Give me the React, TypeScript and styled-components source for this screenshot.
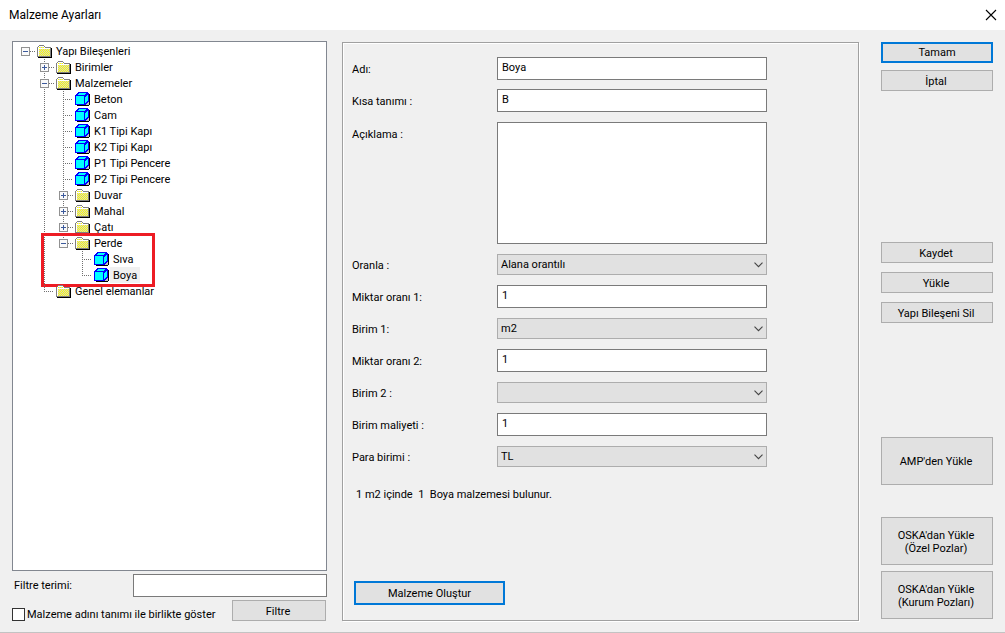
import React, { useState } from "react";
import styled, { createGlobalStyle } from "styled-components";

const GlobalStyle = createGlobalStyle`
  *, *::after { box-sizing: border-box; }
  body {
    margin: 0;
    background: #f0f0f0;
    color: #000;
    font-family: Roboto, Tahoma, sans-serif;
    font-size: 11px;
    line-height: 13px;
  }
  button, input, select, textarea { font: inherit; color: inherit; border-radius: 0; }
`;

const Dialog = styled.div`
  display: flex;
  flex-direction: column;
  min-height: 100vh;
  border-bottom: 1px solid #c3c3c3;
`;

const TitleBar = styled.header`
  display: flex;
  align-items: center;
  justify-content: space-between;
  height: 30px;
  padding: 0 8px 0 9px;
  background: #fff;
`;

const Title = styled.h1`
  margin: 0;
  font-size: 12px;
  font-weight: 400;
  line-height: 16px;
`;

const CloseButton = styled.button`
  display: flex;
  padding: 0;
  border: 0;
  background: none;
`;

const Content = styled.main`
  flex: 1;
  display: grid;
  grid-template-columns: 315px minmax(440px, 1fr) 112px;
  padding: 11px 12px;
`;

const Sidebar = styled.section`
  display: flex;
  flex-direction: column;
`;

const TreeBox = styled.nav`
  flex: 1;
  margin-bottom: 3px;
  padding: 1px 3px;
  border: 1px solid #828790;
  background: #fff;
`;

const Branch = styled.ul`
  margin: 0;
  padding: 0;
  list-style: none;
`;

const Node = styled.li<{ $marked?: boolean }>`
  position: relative;
  ${(p) =>
    p.$marked &&
    `&::after {
      content: "";
      position: absolute;
      inset: -2px auto -4px 25px;
      width: 114px;
      border: 3px solid #ed1c24;
      pointer-events: none;
    }`}
`;

const NodeRow = styled.div`
  display: flex;
  align-items: center;
  height: 16px;
`;

const Guide = styled.svg`
  flex: none;
  width: 19px;
  height: 16px;
`;

const Toggle = styled.button`
  display: flex;
  padding: 0;
  border: 0;
  background: none;
`;

const NodeIcon = styled.svg`
  flex: none;
  width: 16px;
  height: 16px;
  margin-left: 2px;
`;

const NodeLabel = styled.span<{ $selected?: boolean }>`
  padding: 2px 3px 1px;
  background: ${(p) => (p.$selected ? "#f0f0f0" : "transparent")};
  white-space: nowrap;
`;

const FilterRow = styled.div`
  display: flex;
  align-items: center;
  justify-content: space-between;
  padding-left: 2px;
`;

const OptionRow = styled.div`
  display: flex;
  justify-content: space-between;
  padding: 3px 1px 0 0;
`;

const CheckLabel = styled.label`
  display: flex;
  align-items: center;
  gap: 2px;
  padding-top: 8px;
  white-space: nowrap;
`;

const CheckBox = styled.input`
  appearance: none;
  width: 13px;
  height: 13px;
  margin: 0;
  border: 1px solid #333;
  background: #fff;
  &:checked { box-shadow: inset 0 0 0 2px #fff; background: #333; }
`;

const TextInput = styled.input<{ $width?: string }>`
  width: ${(p) => p.$width ?? "270px"};
  height: 23px;
  padding: 0 4px 2px;
  border: 1px solid #7a7a7a;
  background: #fff;
`;

const TextArea = styled.textarea`
  display: block;
  width: 270px;
  height: 122px;
  padding: 3px 4px;
  border: 1px solid #7a7a7a;
  background: #fff;
  resize: none;
`;

const SelectWrap = styled.div`
  display: grid;
  align-items: center;
  width: 270px;
  & > * { grid-area: 1 / 1; }
`;

const Select = styled.select`
  appearance: none;
  width: 100%;
  height: 21px;
  padding: 0 20px 0 3px;
  border: 1px solid #adadad;
  background: #e1e1e1;
`;

const Chevron = styled.svg`
  justify-self: end;
  margin-right: 4px;
  pointer-events: none;
`;

const Button = styled.button<{ $primary?: boolean; $width?: string; $height?: string }>`
  width: ${(p) => p.$width ?? "112px"};
  height: ${(p) => p.$height ?? "21px"};
  padding: ${(p) => (p.$primary ? "0" : "1px 2px 0 0")};
  border: ${(p) => (p.$primary ? "2px solid #0078d7" : "1px solid #adadad")};
  background: #e1e1e1;
  text-align: center;
  white-space: pre-line;
`;

const FormPanel = styled.form`
  display: flex;
  flex-direction: column;
  margin: 1px 22px 0 15px;
  padding: 14px 8px 15px;
  border: 1px solid #a0a0a0;
  box-shadow: inset 1px 1px 0 #fff, 1px 1px 0 #fff;
`;

const Fields = styled.div`
  display: flex;
  flex-direction: column;
  gap: 9px;
`;

const Field = styled.div<{ $tall?: boolean }>`
  display: grid;
  grid-template-columns: 145px 1fr;
  align-items: ${(p) => (p.$tall ? "start" : "center")};
  min-height: 23px;
  padding-top: ${(p) => (p.$tall ? "1px" : "0")};
  padding-left: 1px;
`;

const FieldLabel = styled.label<{ $tall?: boolean }>`
  padding-top: ${(p) => (p.$tall ? "6px" : "2px")};
`;

const Message = styled.p`
  margin: 20px 0 0 5px;
  white-space: pre;
`;

const FormFooter = styled.div`
  margin-top: auto;
  padding-left: 3px;
`;

const Actions = styled.aside`
  display: flex;
  flex-direction: column;
  padding: 1px 0 2px;
`;

const ActionGroup = styled.div<{ $gap: string }>`
  display: flex;
  flex-direction: column;
  gap: ${(p) => p.$gap};
`;

const Spacer = styled.div<{ $grow: number }>`
  flex: ${(p) => p.$grow} 0 32px;
`;

type TreeItem = {
  name: string;
  leaf?: boolean;
  children?: TreeItem[];
  open?: boolean;
  marked?: boolean;
};

const tree: TreeItem = {
  name: "Yapı Bileşenleri",
  open: true,
  children: [
    { name: "Birimler", children: [] },
    {
      name: "Malzemeler",
      open: true,
      children: [
        { name: "Beton", leaf: true },
        { name: "Cam", leaf: true },
        { name: "K1 Tipi Kapı", leaf: true },
        { name: "K2 Tipi Kapı", leaf: true },
        { name: "P1 Tipi Pencere", leaf: true },
        { name: "P2 Tipi Pencere", leaf: true },
        { name: "Duvar", children: [] },
        { name: "Mahal", children: [] },
        { name: "Çatı", children: [] },
        {
          name: "Perde",
          open: true,
          marked: true,
          children: [
            { name: "Sıva", leaf: true },
            { name: "Boya", leaf: true },
          ],
        },
      ],
    },
    { name: "Genel elemanlar" },
  ],
};

function FolderIcon() {
  return (
    <NodeIcon viewBox="0 0 16 16" shapeRendering="crispEdges" aria-hidden="true">
      <defs>
        <pattern id="dither" width="2" height="2" patternUnits="userSpaceOnUse">
          <rect width="2" height="2" fill="#ff0" />
          <rect x="1" width="1" height="1" fill="#d0d0d0" />
          <rect y="1" width="1" height="1" fill="#d0d0d0" />
        </pattern>
      </defs>
      <path d="M1 14h14v1H1zM14 5h1v10h-1z" fill="#000" />
      <path d="M0 4h1V3h1V2h5v1h1v1h6v10H0z" fill="#808080" />
      <path d="M1 4h1V3h5v1h1v1h5v8H1z" fill="#fff" />
      <path d="M2 4h5v1H2zM2 6h11v7H2z" fill="url(#dither)" />
    </NodeIcon>
  );
}

function CubeIcon() {
  return (
    <NodeIcon viewBox="0 0 16 16" shapeRendering="crispEdges" aria-hidden="true">
      <path d="M13 3h2v11h-1v1H2v-1h11z" fill="#000" />
      <path d="M13 11v1h-1v1h-1v1h3v-3z" fill="#c0c0c0" />
      <path d="M0 4h1V3h1V2h1V1h10v1h1v9h-1v1h-1v1h-1v1H0z" fill="#00f" />
      <path
        d="M1 5h8v8H1zM4 2h7v1H4zM3 3h7v1H3zM10 6h1v6h-1zM11 5h1v6h-1zM12 4h1v6h-1z"
        fill="#0ff"
      />
    </NodeIcon>
  );
}

function GuideCell({ up, down, across }: { up: boolean; down: boolean; across: boolean }) {
  return (
    <Guide viewBox="0 0 19 16" aria-hidden="true">
      <g stroke="#707070" strokeDasharray="1 1" shapeRendering="crispEdges">
        {up && <path d="M9.500 0V8" />}
        {down && <path d="M9.500 8V16" />}
        {across && <path d="M9 8.500H20" />}
      </g>
    </Guide>
  );
}

function ToggleCell({ up, down, open }: { up: boolean; down: boolean; open: boolean }) {
  return (
    <Guide viewBox="0 0 19 16" aria-hidden="true">
      <g shapeRendering="crispEdges">
        <g stroke="#707070" strokeDasharray="1 1">
          {up && <path d="M9.500 0V4" />}
          {down && <path d="M9.500 14V16" />}
          <path d="M14 8.500H19" />
        </g>
        <rect x="5.500" y="4.500" width="8" height="8" fill="#fafafa" stroke="#919191" />
        <path d={open ? "M7 8.500h5" : "M7 8.500h5M9.500 6v5"} stroke="#3c5a9c" />
      </g>
    </Guide>
  );
}

type ItemProps = {
  item: TreeItem;
  trail: boolean[];
  first: boolean;
  last: boolean;
  selected: string;
  onSelect: (name: string) => void;
};

function TreeNode({ item, trail, first, last, selected, onSelect }: ItemProps) {
  const [open, setOpen] = useState(!!item.open);
  const root = trail.length === 0;
  return (
    <Node $marked={item.marked}>
      <NodeRow>
        {trail.map((line, i) => (
          <GuideCell key={i} up={line} down={line} across={false} />
        ))}
        {item.children ? (
          <Toggle
            type="button"
            aria-expanded={open}
            aria-label={item.name}
            onClick={() => setOpen(!open)}
          >
            <ToggleCell up={!root || !first} down={!last} open={open} />
          </Toggle>
        ) : (
          <GuideCell up down={!last} across />
        )}
        {item.leaf ? <CubeIcon /> : <FolderIcon />}
        <NodeLabel $selected={selected === item.name} onClick={() => onSelect(item.name)}>
          {item.name}
        </NodeLabel>
      </NodeRow>
      {open && item.children && item.children.length > 0 && (
        <Branch>
          {item.children.map((child, i) => (
            <TreeNode
              key={child.name}
              item={child}
              trail={[...trail, !last]}
              first={i === 0}
              last={i === item.children!.length - 1}
              selected={selected}
              onSelect={onSelect}
            />
          ))}
        </Branch>
      )}
    </Node>
  );
}

function TextField({ id, label, value }: { id: string; label: string; value: string }) {
  return (
    <Field>
      <FieldLabel htmlFor={id}>{label}</FieldLabel>
      <TextInput id={id} defaultValue={value} />
    </Field>
  );
}

function SelectField({ id, label, value }: { id: string; label: string; value: string }) {
  return (
    <Field>
      <FieldLabel htmlFor={id}>{label}</FieldLabel>
      <SelectWrap>
        <Select id={id} defaultValue={value}>
          <option>{value}</option>
        </Select>
        <Chevron width="9" height="6" viewBox="0 0 9 6" aria-hidden="true">
          <path d="M0.500 0.700L4.500 4.700L8.500 0.700" fill="none" stroke="#444" strokeWidth="1.100" />
        </Chevron>
      </SelectWrap>
    </Field>
  );
}

export default function App() {
  const [selected, setSelected] = useState("Boya");
  return (
    <>
      <GlobalStyle />
      <Dialog>
        <TitleBar>
          <Title>Malzeme Ayarları</Title>
          <CloseButton type="button" aria-label="Kapat">
            <svg width="12" height="12" viewBox="0 0 12 12" aria-hidden="true">
              <path d="M1 1L11 11M11 1L1 11" stroke="#000" strokeWidth="1.100" />
            </svg>
          </CloseButton>
        </TitleBar>
        <Content>
          <Sidebar>
            <TreeBox aria-label="Yapı Bileşenleri">
              <Branch>
                <TreeNode
                  item={tree}
                  trail={[]}
                  first
                  last
                  selected={selected}
                  onSelect={setSelected}
                />
              </Branch>
            </TreeBox>
            <FilterRow>
              <label htmlFor="filter">Filtre terimi:</label>
              <TextInput id="filter" $width="194px" />
            </FilterRow>
            <OptionRow>
              <CheckLabel>
                <CheckBox type="checkbox" />
                Malzeme adını tanımı ile birlikte göster
              </CheckLabel>
              <Button type="button" $width="94px">Filtre</Button>
            </OptionRow>
          </Sidebar>
          <FormPanel onSubmit={(e) => e.preventDefault()}>
            <Fields>
              <TextField id="name" label="Adı:" value="Boya" />
              <TextField id="short" label="Kısa tanımı :" value="B" />
              <Field $tall>
                <FieldLabel $tall htmlFor="description">Açıklama :</FieldLabel>
                <TextArea id="description" />
              </Field>
              <SelectField id="ratio" label="Oranla :" value="Alana orantılı" />
              <TextField id="amount1" label="Miktar oranı 1:" value="1" />
              <SelectField id="unit1" label="Birim 1:" value="m2" />
              <TextField id="amount2" label="Miktar oranı 2:" value="1" />
              <SelectField id="unit2" label="Birim 2 :" value="" />
              <TextField id="cost" label="Birim maliyeti :" value="1" />
              <SelectField id="currency" label="Para birimi :" value="TL" />
            </Fields>
            <Message>{"1 m2 içinde  1  Boya malzemesi bulunur."}</Message>
            <FormFooter>
              <Button type="submit" $primary $width="151px" $height="24px">Malzeme Oluştur</Button>
            </FormFooter>
          </FormPanel>
          <Actions>
            <ActionGroup $gap="7px">
              <Button type="button" $primary>Tamam</Button>
              <Button type="button">İptal</Button>
            </ActionGroup>
            <Spacer $grow={121} />
            <ActionGroup $gap="9px">
              <Button type="button">Kaydet</Button>
              <Button type="button">Yükle</Button>
              <Button type="button">Yapı Bileşeni Sil</Button>
            </ActionGroup>
            <Spacer $grow={83} />
            <Button type="button" $height="48px">AMP'den Yükle</Button>
            <Spacer $grow={0} />
            <ActionGroup $gap="6px">
              <Button type="button" $height="48px">{"OSKA'dan Yükle\n(Özel Pozlar)"}</Button>
              <Button type="button" $height="48px">{"OSKA'dan Yükle\n(Kurum Pozları)"}</Button>
            </ActionGroup>
          </Actions>
        </Content>
      </Dialog>
    </>
  );
}
